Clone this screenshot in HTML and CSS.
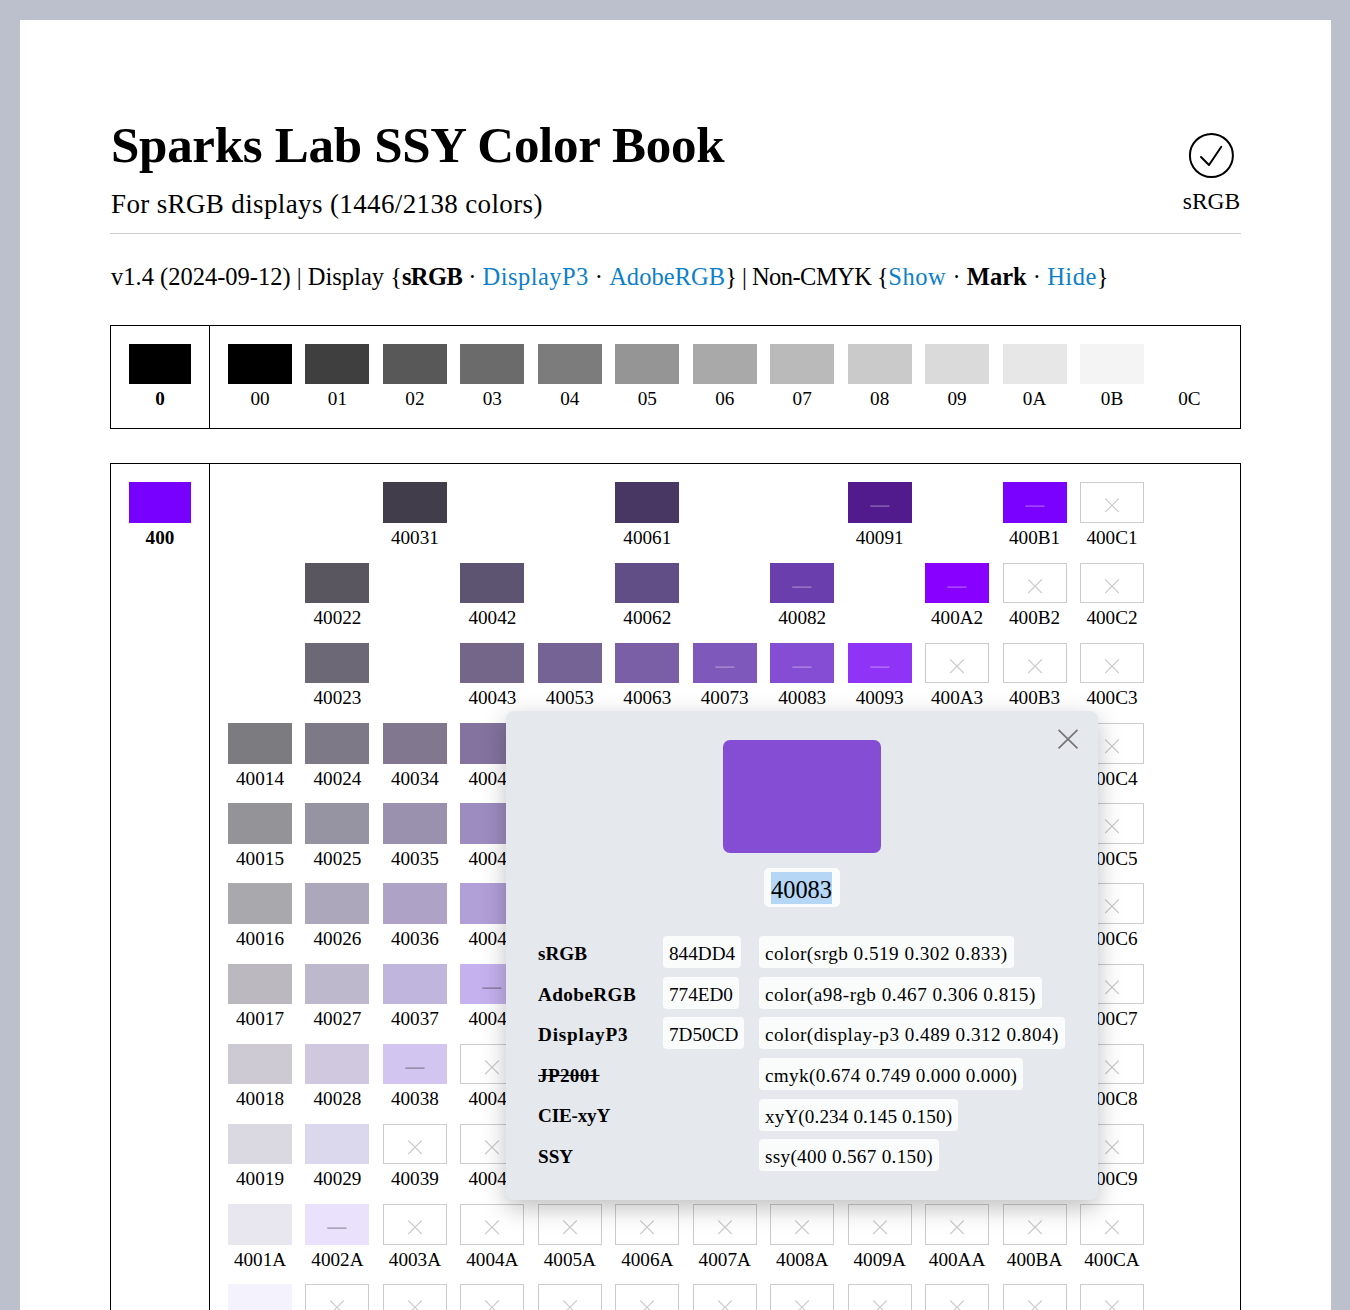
FILE: index.html
```html
<!DOCTYPE html>
<html lang="en">
<head>
<meta charset="utf-8">
<title>Sparks Lab SSY Color Book</title>
<link rel="stylesheet" href="styles.css">
</head>
<body>
<main class="page">
  <header class="header">
    <div class="heading">
      <h1 class="title">Sparks Lab SSY Color Book</h1>
      <p class="subtitle">For sRGB displays (1446/2138 colors)</p>
    </div>
    <div class="gamut">
      <svg class="gamut-icon" width="47" height="47" viewBox="0 0 47 47" fill="none" stroke="#000" stroke-width="2" stroke-linecap="round" stroke-linejoin="round">
        <circle cx="23.4" cy="23.5" r="21.5"/>
        <path d="M13 25l8 8L33.3 14.8"/>
      </svg>
      <span class="gamut-label">sRGB</span>
    </div>
  </header>

  <nav class="options">v1.4 (2024-09-12) | Display {<b class="opt-srgb">sRGB</b> · <a class="opt-p3">DisplayP3</a> · <a class="opt-adobe">AdobeRGB</a><span class="cmyk">} | Non-CMYK {</span><a class="opt-show">Show</a> · <b>Mark</b> · <a class="opt-hide">Hide</a>}</nav>

  <section class="chart chart-gray">
    <div class="hue"><div class="swatch" style="background:#000"></div><b class="code">0</b></div>
    <div class="tones" id="gray"></div>
  </section>

  <section class="chart">
    <div class="hue"><div class="swatch" style="background:#7800ff"></div><b class="code">400</b></div>
    <div class="tones" id="violet"></div>
  </section>
</main>

<aside class="popup">
  <svg class="close" width="22" height="22" viewBox="0 0 22 22" stroke="#757575" stroke-width="1.7"><path d="M1.5 1.9L20.5 20.4M20.5 1.9L1.5 20.4"/></svg>
  <div class="preview"></div>
  <div class="name"><span class="selected">40083</span></div>
  <div class="values">
    <b>sRGB</b><span class="chip">844DD4</span><span class="chip css">color(srgb 0.519 0.302 0.833)</span>
    <b class="adobe">AdobeRGB</b><span class="chip">774ED0</span><span class="chip css">color(a98-rgb 0.467 0.306 0.815)</span>
    <b class="p3">DisplayP3</b><span class="chip">7D50CD</span><span class="chip css">color(display-p3 0.489 0.312 0.804)</span>
    <b class="struck">JP2001</b><span></span><span class="chip css cmyk-value">cmyk(0.674 0.749 0.000 0.000)</span>
    <b class="xyy">CIE-xyY</b><span></span><span class="chip css xyy-value">xyY(0.234 0.145 0.150)</span>
    <b>SSY</b><span></span><span class="chip css ssy-value">ssy(400 0.567 0.150)</span>
  </div>
</aside>
<script src="chart.js"></script>
</body>
</html>
```
FILE: chart.js
```js
// Columns and rows are numbered in hex. Each row lists one entry per column:
// a colour, a colour with "-w" or "-k" (outside CMYK, light or dark dash),
// "x" (outside the gamut) or "." (no cell).
const DIGITS = '0123456789ABC';
const GRAY = '#000 #3f3f3f #585858 #6b6b6b #7c7c7c #959595 #a9a9a9 #bababa #cacaca #dadada #e7e7e7 #f4f4f4 #fff';
const VIOLET = [
  '. . #423d4a . . #493763 . . #511b8e-w . #7a00ff-w x',
  '. #5a5660 . #5d5471 . #614e87 . #6b3eae-w . #8800ff-w x x',
  '. #6c6875 . #736688 #766396 #7a5fa6 #7e58ba-w #844dd4-w #8f33f7-w x x x',
  '#7c7b7f #7e7986 #81778f #83739e . . . . . . . x',
  '#949398 #9693a2 #9a91af #9d8cbf . . . . . . . x',
  '#a9a8ad #aca7ba #aea3c6 #b19fd7 . . . . . . . x',
  '#bbb9bf #bdb8cc #c0b5dd #c5b1ee-k . . . . . . . x',
  '#cdcad3 #cfc8df #d2c5ef-k x . . . . . . . x',
  '#dad9e2 #dbd7ed x x . . . . . . . x',
  '#e8e6ef #eae1fd-k x x x x x x x x x x',
  '#f4f2fc x x x x x x x x x x x'
];
const CROSS = '<svg class="mark" viewBox="0 0 64 40" fill="none" stroke="#ccc" stroke-width="1.1"><path d="M25.2 16.5L38.8 30M38.8 16.5L25.2 30"/></svg>';
const dash = c => `<svg class="mark" viewBox="0 0 64 40"><path d="M22.3 23.3h19.2v1.7H22.3z" fill="${c}" fill-opacity=".27"/></svg>`;

function cell(entry, code, row, col) {
  const [color, tone] = entry.split('-');
  const out = color === 'x';
  const mark = out ? CROSS : tone ? dash(tone === 'w' ? '#fff' : '#000') : '';
  const label = code ? `<span class="code">${code}</span>` : '';
  return `<div class="cell" style="grid-area:${row}/${col}"><div class="swatch${out ? ' out' : ''}"${out ? '' : ` style="background:${color}"`}>${mark}</div>${label}</div>`;
}

document.getElementById('gray').innerHTML =
  GRAY.split(' ').map((c, i) => cell(c, '0' + DIGITS[i], 1, i + 1)).join('');

document.getElementById('violet').innerHTML = VIOLET.map((line, r) =>
  line.split(' ').map((c, i) => c === '.' ? '' :
    cell(c, r < 10 ? '400' + DIGITS[i + 1] + '123456789A'[r] : '', r + 1, i + 1)).join('')).join('');
```
FILE: styles.css
```css
* { box-sizing: border-box; }
html { height: 1310px; overflow: hidden; }
body {
  margin: 0;
  height: 1310px;
  overflow: hidden;
  position: relative;
  background: #bcc0cc;
  color: #000;
  font-family: "Liberation Serif", serif;
}
b { font-weight: 700; }
.page {
  width: 1311px;
  margin: 20px 0 0 20px;
  padding: 90px 90px 0;
  background: #fff;
}
.header {
  display: flex;
  justify-content: space-between;
  height: 124px;
  border-bottom: 1px solid #ccc;
}
.heading { padding-left: 1px; }
.title {
  margin: 0;
  font-size: 51px;
  line-height: 70px;
  letter-spacing: -.3px;
}
.subtitle {
  margin: 0;
  font-size: 27px;
  line-height: 48px;
  letter-spacing: .37px;
}
.gamut {
  display: flex;
  flex-direction: column;
  align-items: center;
  width: 59px;
  padding-top: 22px;
}
.gamut-icon { display: block; flex: none; }
.gamut-label { font-size: 23.5px; line-height: 44px; }

.options {
  margin: 24px 0 29.1px;
  padding-left: 1px;
  font-size: 24.5px;
  line-height: 37.5px;
  white-space: nowrap;
}
.options a { color: #0d7fcb; }
.opt-srgb { letter-spacing: -.6px; }
.opt-p3 { letter-spacing: .45px; }
.opt-adobe { letter-spacing: .05px; }
.cmyk { letter-spacing: -.55px; }
.opt-show { letter-spacing: .6px; }
.opt-hide { letter-spacing: .5px; }

.chart {
  display: flex;
  width: 1131px;
  border: 1px solid #000;
}
.chart-gray { height: 104.2px; margin-bottom: 34.6px; }
.hue {
  width: 99px;
  flex: none;
  padding: 18px;
  border-right: 1px solid #000;
}
.tones {
  display: grid;
  grid-template-columns: repeat(13, 64px);
  grid-auto-rows: 70.2px;
  gap: 10px 13.46px;
  padding: 18px;
}
.swatch { height: 40.6px; }
.swatch.out { border: 1px solid #ccc; }
.mark { display: block; width: 64px; height: 40px; }
.out .mark { margin: -1px; }
.code {
  display: block;
  font-size: 19.2px;
  line-height: 29.8px;
  text-align: center;
}

.popup {
  position: absolute;
  left: 506px;
  top: 711px;
  width: 592px;
  height: 489px;
  padding: 29px 32px 0;
  display: flex;
  flex-direction: column;
  align-items: center;
  border-radius: 8px;
  background: #e5e8ed;
  box-shadow: 0 8px 24px rgba(0, 0, 0, .25);
}
.close { position: absolute; right: 19px; top: 17px; }
.preview {
  width: 158px;
  height: 113px;
  flex: none;
  border-radius: 7px;
  background: #844dd4;
}
.name {
  width: 76px;
  height: 39px;
  flex: none;
  margin: 15px 0 29px;
  padding: 4px 7px 0;
  border-radius: 5px;
  background: #fafcfc;
}
.selected {
  display: block;
  width: 61px;
  height: 32px;
  background: #b5d6f4;
  font-size: 24.4px;
  line-height: 36px;
}
.values {
  align-self: stretch;
  display: grid;
  grid-template-columns: 125px 96px 1fr;
  grid-auto-rows: 32px;
  row-gap: 8.65px;
  justify-items: start;
  font-size: 19.2px;
  line-height: 29px;
  white-space: nowrap;
}
.values b { padding-top: 3px; }
.values .adobe { letter-spacing: .4px; }
.values .p3 { letter-spacing: .8px; }
.values .struck { text-decoration: line-through; letter-spacing: .3px; }
.values .xyy { padding-top: 2px; letter-spacing: -.2px; }
.chip {
  padding: 3px 6px 0;
  border-radius: 4px;
  background: #fafcfc;
}
.css { letter-spacing: .48px; }
.cmyk-value { letter-spacing: .34px; }
.xyy-value { letter-spacing: .1px; }
.ssy-value { letter-spacing: .3px; }
```
